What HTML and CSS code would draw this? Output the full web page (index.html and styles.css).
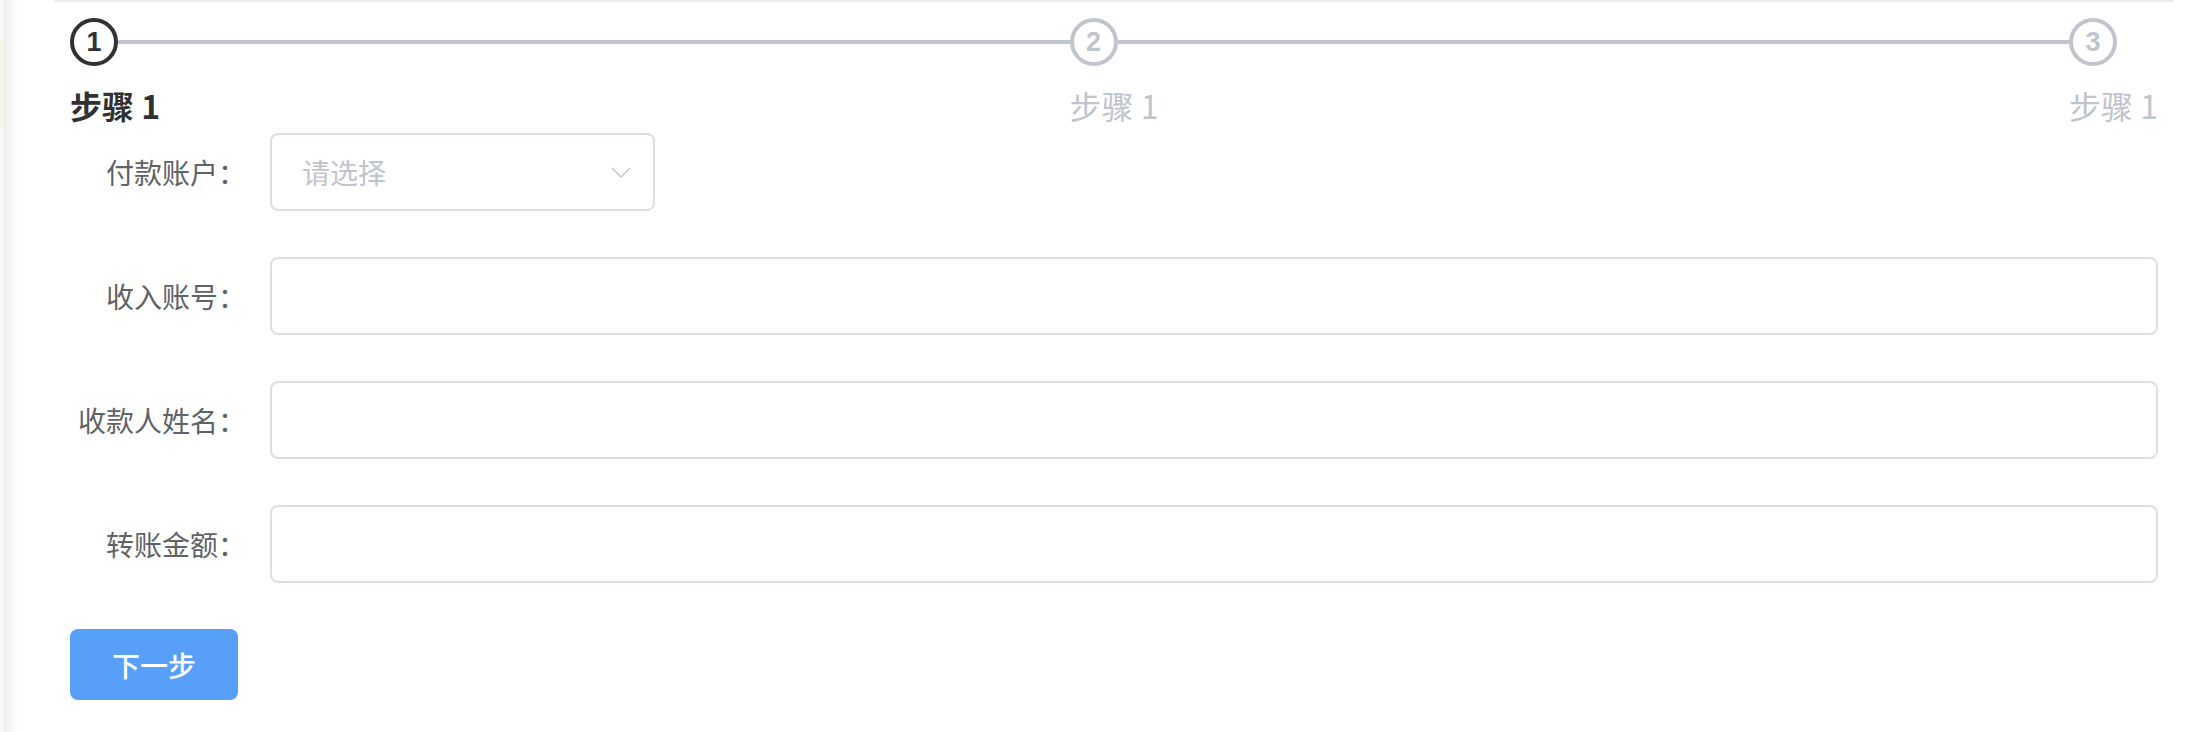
FILE: index.html
```html
<!DOCTYPE html>
<html lang="zh-CN">
<head>
<meta charset="utf-8">
<title>转账</title>
<link rel="stylesheet" href="styles.css">
</head>
<body>
<div class="page">
  <aside class="side"><div class="side-mark"></div></aside>
  <main class="main">
    <section class="card">
      <div class="steps">
        <div class="step is-process">
          <div class="step-head"><div class="step-icon">1</div><div class="step-line"></div></div>
          <div class="step-title">步骤 1</div>
        </div>
        <div class="step is-wait">
          <div class="step-head"><div class="step-icon">2</div><div class="step-line"></div></div>
          <div class="step-title">步骤 1</div>
        </div>
        <div class="step is-wait last">
          <div class="step-head"><div class="step-icon">3</div></div>
          <div class="step-title">步骤 1</div>
        </div>
      </div>

      <form class="form">
        <div class="form-item">
          <label class="form-label">付款账户：</label>
          <div class="select">
            <span class="placeholder">请选择</span>
            <svg class="arrow" width="20" height="11" viewBox="0 0 20 11"><polyline points="1,1 10,10 19,1" fill="none" stroke="#c0c4cc" stroke-width="1.4"/></svg>
          </div>
        </div>
        <div class="form-item">
          <label class="form-label">收入账号：</label>
          <div class="input"></div>
        </div>
        <div class="form-item">
          <label class="form-label">收款人姓名：</label>
          <div class="input"></div>
        </div>
        <div class="form-item">
          <label class="form-label">转账金额：</label>
          <div class="input"></div>
        </div>
        <div class="form-item">
          <button type="button" class="btn-primary">下一步</button>
        </div>
      </form>
    </section>
  </main>
</div>
</body>
</html>
```

FILE: styles.css
```css
* { box-sizing: border-box; }
html, body { margin: 0; padding: 0; background: #fff; }
body {
  font-family: "Noto Sans CJK SC", "Noto Sans", "Liberation Sans", sans-serif;
  width: 2204px;
  height: 732px;
  overflow: hidden;
}
.page {
  display: flex;
  height: 732px;
}
.side {
  width: 4px;
  flex: none;
  padding-top: 40px;
  background: #f7f7f7;
}
.side-mark {
  height: 85px;
  background: #eef7e8;
}
.main {
  flex: 1;
  padding: 0 31px 0 50px;
  background: linear-gradient(to right, #ececec 0, #f6f6f6 5px, #ffffff 14px) no-repeat;
}
.card {
  border-top: 2px solid #ebebeb;
  padding: 16px 15px 0 16px;
}

/* steps */
.steps {
  display: flex;
  color: #c0c4cc;
}
.step {
  flex: 0 1 50%;
  min-width: 0;
}
.step.last {
  flex: none;
}
.step-head {
  display: flex;
  align-items: center;
  height: 48px;
}
.step-icon {
  width: 48px;
  height: 48px;
  flex: none;
  border: 4px solid #c0c4cc;
  border-radius: 50%;
  display: flex;
  align-items: center;
  justify-content: center;
  font-family: "Liberation Sans", "Noto Sans", sans-serif;
  font-size: 27px;
  font-weight: 600;
  color: #c0c4cc;
  background: #fff;
}
.step-line {
  flex: 1;
  height: 4px;
  background: #c0c4cc;
}
.step-title {
  padding-top: 19px;
  line-height: 40px;
  font-size: 32px;
  white-space: nowrap;
  color: #c0c4cc;
}
.is-process .step-icon {
  border-color: #303133;
  color: #303133;
}
.is-process .step-title {
  color: #303133;
  font-weight: 700;
}

/* form */
.form {
  padding-top: 8px;
}
.form-item {
  display: flex;
  align-items: center;
  margin-bottom: 46px;
}
.form-label {
  width: 200px;
  flex: none;
  padding-right: 24px;
  text-align: right;
  font-size: 28px;
  line-height: 78px;
  color: #606266;
}
.select {
  width: 385px;
  height: 78px;
  border: 2px solid #dcdfe6;
  border-radius: 8px;
  display: flex;
  align-items: center;
  justify-content: space-between;
  padding: 0 22px 0 30px;
}
.placeholder {
  font-size: 28px;
  color: #c0c4cc;
}
.arrow {
  display: block;
}
.input {
  flex: 1;
  height: 78px;
  border: 2px solid #dcdfe6;
  border-radius: 8px;
}
.btn-primary {
  width: 168px;
  height: 71px;
  border: none;
  border-radius: 8px;
  background: #589ff9;
  color: #fff;
  font-family: "Noto Sans CJK SC", "Noto Sans", sans-serif;
  font-size: 28px;
  font-weight: 500;
  padding: 0;
}
```
